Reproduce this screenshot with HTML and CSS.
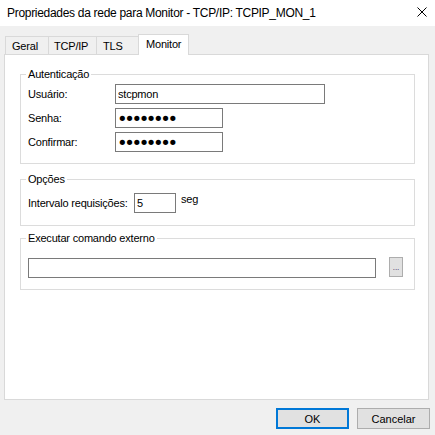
FILE: index.html
```html
<!DOCTYPE html>
<html lang="pt">
<head>
<meta charset="utf-8">
<title>Propriedades da rede</title>
<link rel="stylesheet" href="styles.css">
</head>
<body>
<div class="window">
  <div class="titlebar">
    <span class="title">Propriedades da rede para Monitor - TCP/IP: TCPIP_MON_1</span>
    <svg class="close" width="10" height="10" viewBox="0 0 10 10"><path d="M0.5 0.5L9.5 9.5M9.5 0.5L0.5 9.5" stroke="#000" stroke-width="1" fill="none"/></svg>
  </div>
  <div class="tabs">
    <div class="tab tab-geral">Geral</div>
    <div class="tab tab-tcp">TCP/IP</div>
    <div class="tab tab-tls">TLS</div>
    <div class="tab tab-active">Monitor</div>
  </div>
  <div class="panel">
    <fieldset class="group group-auth">
      <legend>Autenticação</legend>
      <div class="rows">
        <div class="row"><label class="lbl">Usuário:</label><input class="field field-user" type="text" value="stcpmon"></div>
        <div class="row"><label class="lbl">Senha:</label><input class="field field-pass" type="password" value="12345678"></div>
        <div class="row"><label class="lbl">Confirmar:</label><input class="field field-pass" type="password" value="12345678"></div>
      </div>
    </fieldset>
    <fieldset class="group group-opt">
      <legend>Opções</legend>
      <div class="row">
        <label class="lbl lbl-int">Intervalo requisições:</label><input class="field field-int" type="text" value="5"><span class="unit">seg</span>
      </div>
    </fieldset>
    <fieldset class="group group-exec">
      <legend>Executar comando externo</legend>
      <div class="row row-exec">
        <input class="field field-cmd" type="text" value="">
        <button class="browse" type="button">...</button>
      </div>
    </fieldset>
  </div>
  <div class="buttons">
    <button class="btn btn-ok" type="button">OK</button>
    <button class="btn" type="button">Cancelar</button>
  </div>
</div>
</body>
</html>
```
FILE: styles.css
```css
html, body {
  margin: 0;
  padding: 0;
}
body {
  background: #f0f0f0;
  font-family: "Liberation Sans", Arial, sans-serif;
  font-size: 11px;
  letter-spacing: -0.2px;
  color: #000;
  width: 435px;
  height: 435px;
  overflow: hidden;
}
.window {
  display: flex;
  flex-direction: column;
  height: 435px;
}
.titlebar {
  height: 26px;
  background: #fff;
  display: flex;
  align-items: center;
  justify-content: space-between;
  padding: 0 8px 0 7px;
  font-size: 12px;
  letter-spacing: -0.3px;
}
.close {
  display: block;
  margin-top: -2px;
}
.tabs {
  display: flex;
  align-items: flex-end;
  height: 20px;
  margin-top: 8px;
  padding-left: 5px;
}
.tab {
  box-sizing: border-box;
  height: 18px;
  border: 1px solid #d9d9d9;
  border-bottom: none;
  background: #f0f0f0;
  display: flex;
  align-items: center;
  justify-content: flex-start;
  padding: 1px 0 0 6px;
}
.tab + .tab {
  margin-left: -1px;
}
.tab-geral { width: 44px; }
.tab-tcp { width: 49px; padding-left: 5px; }
.tab-tls { width: 43px; padding-left: 6px; }
.tab-active {
  width: 51px;
  height: 21px;
  margin-left: -3px;
  margin-bottom: -1px;
  background: #fff;
  position: relative;
  z-index: 1;
  padding: 0 0 3px 7px;
}
.panel {
  box-sizing: border-box;
  width: 425px;
  height: 346px;
  margin-left: 4px;
  background: #fff;
  border: 1px solid #d9d9d9;
  padding: 12px 13px 0 15px;
  display: flex;
  flex-direction: column;
}
.group {
  margin: 0;
  padding: 0 0 0 7px;
  min-width: 0;
  border: 1px solid #dcdcdc;
}
.group legend {
  margin-left: -2px;
  padding: 0 2px;
  line-height: 14px;
  font-size: 11px;
}
.group-auth { padding-top: 3px; padding-bottom: 11px; }
.group-opt { margin-top: 8px; padding-top: 7px; padding-bottom: 12px; }
.group-exec { margin-top: 5px; padding-top: 13px; padding-bottom: 11px; }
.rows {
  display: flex;
  flex-direction: column;
  gap: 4px;
}
.row {
  display: flex;
  align-items: center;
  height: 20px;
}
.lbl {
  width: 87px;
  flex: none;
}
.lbl-int {
  width: 106px;
}
.field {
  box-sizing: border-box;
  height: 20px;
  border: 1px solid #7a7a7a;
  padding: 0 2px;
  margin: 0;
  font-family: "Liberation Sans", Arial, sans-serif;
  font-size: 11px;
  letter-spacing: -0.2px;
  color: #000;
  background: #fff;
  outline: none;
}
.field-user { width: 210px; }
.field-pass {
  width: 108px;
  font-family: "DejaVu Sans", sans-serif;
  font-size: 18px;
  letter-spacing: -3.4px;
  padding-left: 1px;
}
.field-int { width: 42px; }
.unit {
  align-self: flex-start;
  margin-left: 5px;
  line-height: 13px;
}
.row-exec {
  align-items: flex-start;
}
.field-cmd { width: 348px; }
.browse {
  box-sizing: border-box;
  width: 14px;
  height: 20px;
  margin: -1px 0 0 13px;
  padding: 0 0 4px;
  border: 1px solid #adadad;
  background: #e1e1e1;
  font-family: "DejaVu Sans", sans-serif;
  font-size: 7px;
  line-height: 1;
  color: #402060;
  display: flex;
  align-items: flex-end;
  justify-content: center;
  letter-spacing: 0;
}
.buttons {
  display: flex;
  justify-content: flex-end;
  gap: 8px;
  padding-right: 5px;
  margin-top: 8px;
}
.btn {
  box-sizing: border-box;
  width: 73px;
  height: 21px;
  margin: 0;
  padding: 0;
  border: 1px solid #adadad;
  background: #e1e1e1;
  font-family: "Liberation Sans", Arial, sans-serif;
  font-size: 11px;
  color: #000;
}
.btn-ok {
  border: 2px solid #0078d7;
}
```
